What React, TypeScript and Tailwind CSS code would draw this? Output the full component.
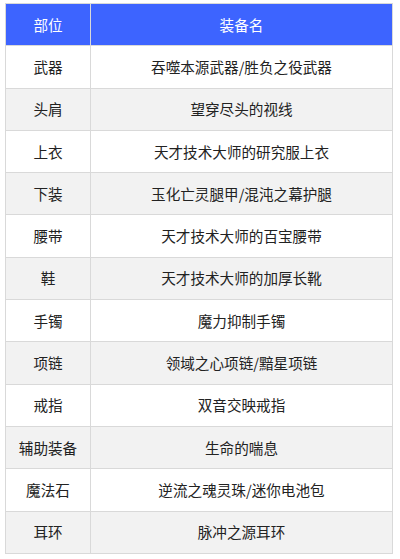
import React from "react";

const rows: [string, string][] = [
  ["武器", "吞噬本源武器/胜负之役武器"],
  ["头肩", "望穿尽头的视线"],
  ["上衣", "天才技术大师的研究服上衣"],
  ["下装", "玉化亡灵腿甲/混沌之幕护腿"],
  ["腰带", "天才技术大师的百宝腰带"],
  ["鞋", "天才技术大师的加厚长靴"],
  ["手镯", "魔力抑制手镯"],
  ["项链", "领域之心项链/黯星项链"],
  ["戒指", "双音交映戒指"],
  ["辅助装备", "生命的喘息"],
  ["魔法石", "逆流之魂灵珠/迷你电池包"],
  ["耳环", "脉冲之源耳环"],
];

export default function App() {
  return (
    <div
      className="w-[400px] h-[559px] bg-white pt-[3px] pl-[5px]"
      style={{ fontFamily: '"Microsoft YaHei", "Noto Sans CJK SC", "Noto Sans", sans-serif' }}
    >
      <table className="w-[388px] border-collapse text-[14.6px] text-[#222]">
        <thead>
          <tr className="h-[42.3px] bg-[#3d64ff] text-white">
            <th className="w-[85px] border border-[#d9d9d9] font-normal">部位</th>
            <th className="border border-[#d9d9d9] font-normal">装备名</th>
          </tr>
        </thead>
        <tbody>
          {rows.map(([a, b], i) => (
            <tr key={i} className={i % 2 === 0 ? "h-[42.3px] bg-white" : "h-[42.3px] bg-[#f2f2f2]"}>
              <td className="border border-[#d9d9d9] text-center">{a}</td>
              <td className="border border-[#d9d9d9] text-center">{b}</td>
            </tr>
          ))}
        </tbody>
      </table>
    </div>
  );
}
